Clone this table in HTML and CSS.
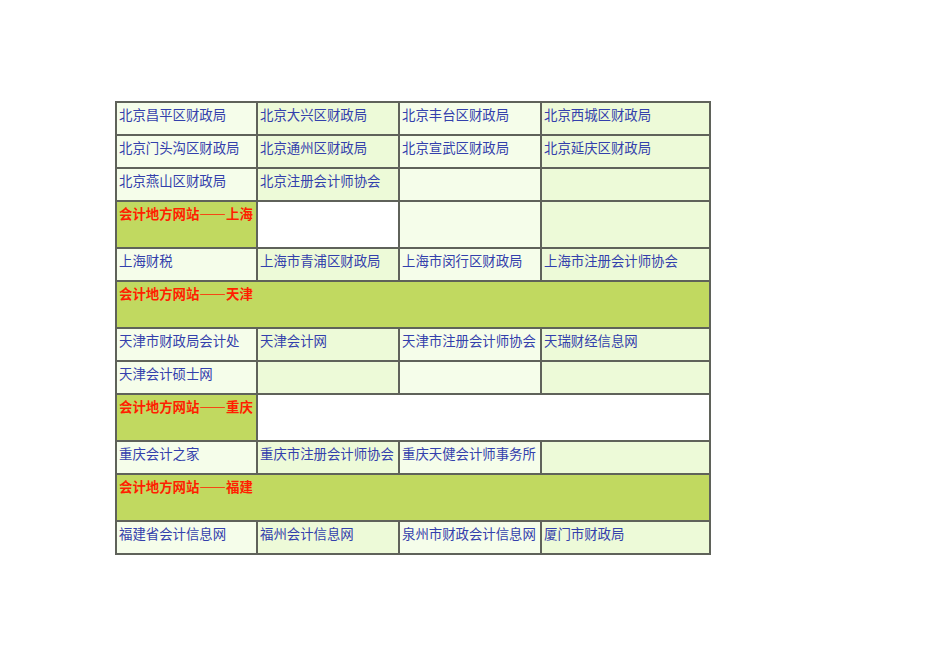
FILE: index.html
```html
<!DOCTYPE html>
<html lang="zh-CN">
<head>
<meta charset="utf-8">
<title>会计地方网站</title>
<link rel="stylesheet" href="styles.css">
</head>
<body>
<div class="page">
<table class="sites">
<colgroup><col class="c1"><col class="c2"><col class="c3"><col class="c4"></colgroup>
<tr class="row">
<td class="a"><a>北京昌平区财政局</a></td><td class="b"><a>北京大兴区财政局</a></td><td class="a"><a>北京丰台区财政局</a></td><td class="b"><a>北京西城区财政局</a></td>
</tr>
<tr class="row">
<td class="a"><a>北京门头沟区财政局</a></td><td class="b"><a>北京通州区财政局</a></td><td class="a"><a>北京宣武区财政局</a></td><td class="b"><a>北京延庆区财政局</a></td>
</tr>
<tr class="row">
<td class="a"><a>北京燕山区财政局</a></td><td class="b"><a>北京注册会计师协会</a></td><td class="a"></td><td class="b"></td>
</tr>
<tr class="head">
<td class="h">会计地方网站——上海</td><td class="w"></td><td class="a"></td><td class="b"></td>
</tr>
<tr class="row">
<td class="a"><a>上海财税</a></td><td class="b"><a>上海市青浦区财政局</a></td><td class="a"><a>上海市闵行区财政局</a></td><td class="b"><a>上海市注册会计师协会</a></td>
</tr>
<tr class="head">
<td class="h" colspan="4">会计地方网站——天津</td>
</tr>
<tr class="row">
<td class="a"><a>天津市财政局会计处</a></td><td class="b"><a>天津会计网</a></td><td class="a"><a>天津市注册会计师协会</a></td><td class="b"><a>天瑞财经信息网</a></td>
</tr>
<tr class="row">
<td class="a"><a>天津会计硕士网</a></td><td class="b"></td><td class="a"></td><td class="b"></td>
</tr>
<tr class="head">
<td class="h">会计地方网站——重庆</td><td class="w" colspan="3"></td>
</tr>
<tr class="row">
<td class="a"><a>重庆会计之家</a></td><td class="b"><a>重庆市注册会计师协会</a></td><td class="a"><a>重庆天健会计师事务所</a></td><td class="b"></td>
</tr>
<tr class="head">
<td class="h" colspan="4">会计地方网站——福建</td>
</tr>
<tr class="row">
<td class="a"><a>福建省会计信息网</a></td><td class="b"><a>福州会计信息网</a></td><td class="a"><a>泉州市财政会计信息网</a></td><td class="b"><a>厦门市财政局</a></td>
</tr>
</table>
</div>
</body>
</html>
```
FILE: styles.css
```css
html, body {
  margin: 0;
  padding: 0;
  background: #ffffff;
}
.page {
  padding: 101px 0 0 115px;
  font-family: "Noto Sans CJK SC", "Noto Sans", sans-serif;
  font-size: 13.4px;
}
.sites {
  border-collapse: collapse;
  table-layout: fixed;
  width: 594px;
  border: 2px solid #5f625a;
}
.c1 { width: 141px; }
.c2 { width: 142px; }
.c3 { width: 142px; }
.c4 { width: 169px; }
.sites td {
  border: 2px solid #5f625a;
  vertical-align: top;
  padding: 1px 2px 0 2px;
  line-height: 20px;
  white-space: nowrap;
  overflow: hidden;
  font-feature-settings: "fwid";
}
.row td { height: 30px; }
.head td { height: 44px; }
.sites a {
  color: #3340ac;
  text-decoration: none;
}
.a { background: #f5fdea; }
.b { background: #edfad8; }
.w { background: #ffffff; }
.h {
  background: #c1d960;
  color: #ff1f00;
  font-weight: bold;
}
```
